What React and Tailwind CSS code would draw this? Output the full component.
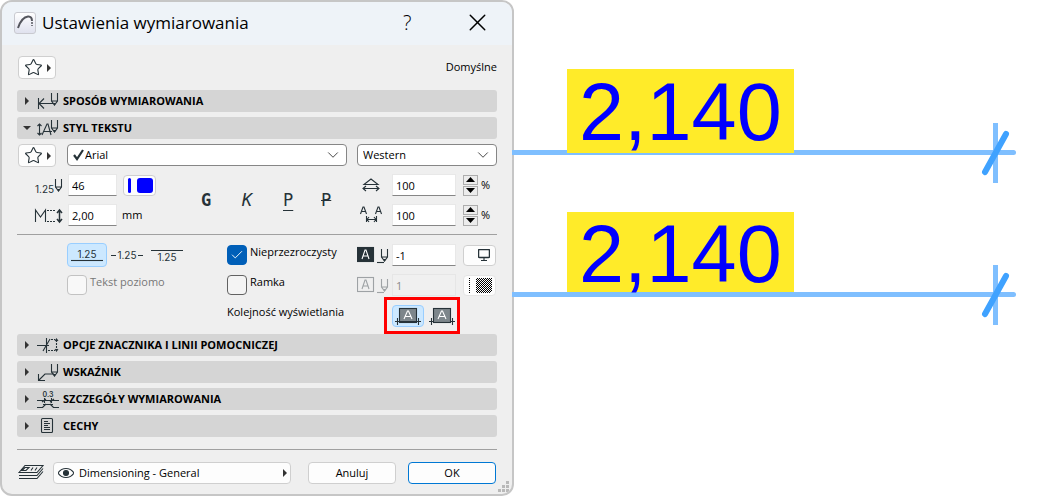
import { useState } from 'react';
import { Check, ChevronDown, Star, X } from 'lucide-react';

const ink = '#263238';

const Caret = ({ open = false }) => (
  <svg width="8" height="8" viewBox="0 0 8 8" className="shrink-0" fill="#333">
    {open ? <path d="M0 2h8L4 6z" /> : <path d="M2 0v8l4-4z" />}
  </svg>
);

// Pen nib reused by several of the icons
const Pen = ({ x = 0, y = 0 }) => (
  <g transform={`translate(${x} ${y})`}>
    <path d="M.5 0v8l3 4 3-4V0M.5 8h6" />
    <path d="M2 10h3l-1.500 2.500z" fill="currentColor" stroke="none" />
  </g>
);

const Icon = ({ width = 22, height = 18, className = '', children }) => (
  <svg
    width={width}
    height={height}
    viewBox={`0 0 ${width} ${height}`}
    fill="none"
    stroke="currentColor"
    strokeWidth="1.1"
    className={`shrink-0 text-[#263238] ${className}`}
  >
    {children}
  </svg>
);

const MethodIcon = () => (
  <Icon>
    <path d="M1.500 6v11M2 11.500h14M7 6.500l-5 5 5 5" />
    <Pen x={14} y={1} />
  </Icon>
);

const TextStyleIcon = () => (
  <Icon>
    <path d="M2.500 5v11M.5 7l2-2 2 2M.5 14l2 2 2-2M5 16l5-11h1l3 11M7 12.500h8" />
    <Pen x={14} y={1} />
  </Icon>
);

const MarkerIcon = () => (
  <Icon>
    <path d="M0 9.500h12M9.500 2v15M6 15l7-12" />
    <path d="M14 3.500h4M11 14.500h7M19.500 4v10" strokeDasharray="2 1" />
    <path d="M18 5l1.500-2 1.500 2M18 13l1.500 2 1.500-2" />
  </Icon>
);

const PointerIcon = () => (
  <Icon>
    <path d="M1.500 11v6.500H8M2 17l6-6h9" />
    <Pen x={14} y={1} />
  </Icon>
);

const DetailsIcon = () => (
  <Icon>
    <text x="11" y="7" textAnchor="middle" fontSize="7" stroke="none" fill="currentColor" className="font-[Inter,sans-serif] font-semibold">0.3</text>
    <path d="M0 10.500h22M0 17.500h6M16 17.500h6M6 14.500h10M7.500 8v5M14.500 8v5M5 18l4-4M13 14l4 4M5 12l4-3M13 12l4-3" />
  </Icon>
);

const PropertiesIcon = () => (
  <Icon>
    <rect x="4.500" y="1.500" width="11" height="14" rx="1" />
    <path d="M7 4.500h4M7 6.500h6M7 8.500h4M7 10.500h6M7 12.500h6" />
  </Icon>
);

const SectionBar = ({ icon, label, open = false }) => (
  <button
    type="button"
    aria-expanded={open}
    className="flex h-[22px] w-full items-center rounded-[3px] bg-[#d5d5d5] pl-1.5 text-left text-[11px] font-bold text-black"
  >
    <Caret open={open} />
    <span className="ml-1.5 mr-1 flex w-[22px]">{icon}</span>
    {label}
  </button>
);

const FavoriteButton = () => (
  <button
    type="button"
    aria-label="Ulubione"
    className="ml-px flex h-[23px] w-[38px] items-center justify-center gap-0.5 rounded border border-[#cfcfcf] bg-[#fdfdfd] pl-0.5"
  >
    <Star size={19} strokeWidth={1.4} color={ink} />
    <Caret />
  </button>
);

const SelectBox = ({ label, value, ticked = false, className = '' }) => (
  <div className={`flex h-[22px] items-center rounded-sm border border-[#868686] bg-white pl-[5px] pr-1 ${className}`}>
    {ticked && (
      <svg width="11" height="12" viewBox="0 0 11 12" fill="none" stroke={ink} strokeWidth="2.200" className="mr-px shrink-0">
        <path d="M1 6l3 4L10 1" />
      </svg>
    )}
    <select aria-label={label} defaultValue={value} className="min-w-0 flex-1 appearance-none bg-transparent text-[11px]">
      <option>{value}</option>
    </select>
    <ChevronDown size={18} strokeWidth={1.3} color="#444" className="pointer-events-none shrink-0" />
  </div>
);

const Field = ({ label, value, disabled = false, className = '' }) => (
  <input
    type="text"
    aria-label={label}
    defaultValue={value}
    disabled={disabled}
    className={`h-[22px] border px-[3px] text-[11px] ${
      disabled ? 'border-[#e6e6e6] bg-[#f0f0f0] text-[#8a8a8a]' : 'border-[#e8e8e8] border-b-[#868686] bg-white'
    } ${className}`}
  />
);

const Spinner = ({ label }) => (
  <div className="flex flex-col gap-px">
    <button type="button" aria-label={`${label} +`} className="flex h-[10px] w-[15px] items-center justify-center border border-[#adadad] bg-[#ececec]">
      <svg width="9" height="5" viewBox="0 0 9 5"><path d="M0 5h9L4.500 0z" /></svg>
    </button>
    <button type="button" aria-label={`${label} -`} className="flex h-[10px] w-[15px] items-center justify-center border border-[#adadad] bg-[#ececec]">
      <svg width="9" height="5" viewBox="0 0 9 5"><path d="M0 0h9L4.500 5z" /></svg>
    </button>
  </div>
);

const CheckBox = ({ label, initial = false, disabled = false }) => {
  const [checked, setChecked] = useState(initial);

  return (
    <label className={`flex gap-[3px] text-[11px] leading-[14px] ${disabled ? 'text-[#777]' : 'text-black'}`}>
      <span className="grid size-5 shrink-0">
        <input
          type="checkbox"
          checked={checked}
          disabled={disabled}
          onChange={() => setChecked(!checked)}
          className={`col-start-1 row-start-1 size-5 appearance-none rounded border checked:border-[#005fb8] checked:bg-[#005fb8] ${
            disabled ? 'border-[#c2c2c2] bg-[#f8f8f8]' : 'border-[#626262] bg-[#f4f4f4]'
          }`}
        />
        {checked && (
          <Check size={14} strokeWidth={1.6} color="white" className="pointer-events-none col-start-1 row-start-1 place-self-center" />
        )}
      </span>
      {label}
    </label>
  );
};

const PlacementIcon = ({ line }) => (
  <Icon width={32} height={20} className="font-[Inter,sans-serif]">
    {line === 'middle' ? (
      <>
        <path d="M0 10.500h5M27 10.500h5" />
        <text x="16" y="14" textAnchor="middle" fontSize="10" stroke="none" fill="currentColor">1.25</text>
      </>
    ) : (
      <>
        <path d={line === 'below' ? 'M0 15.500h32' : 'M0 5.500h32'} />
        <text x="16" y={line === 'below' ? 13 : 16} textAnchor="middle" fontSize="10" stroke="none" fill="currentColor">1.25</text>
      </>
    )}
  </Icon>
);

const BackgroundPenIcon = ({ filled = false }) => (
  <Icon width={32} height={18} className={filled ? '' : 'opacity-40'}>
    <rect x=".5" y="1.500" width="16" height="14" fill={filled ? ink : 'none'} />
    <path d="M5 13l3-9h1l3 9M6 10h5" stroke={filled ? 'white' : ink} />
    <path d="M20 16.500h7" />
    <Pen x={24} y={3} />
  </Icon>
);

const OrderIcon = ({ front = false }) => (
  <Icon width={26} height={20}>
    <rect x="4.500" y="2.500" width="17" height="14" fill="#7d868b" />
    <path d="M9 13l3.500-8h1L17 13M10 10.500h6" stroke="white" />
    <path d={front ? 'M0 15.500h4M22 15.500h4M2.500 12v7M23.500 12v7' : 'M0 15.500h26M2.500 12v7M23.500 12v7'} />
  </Icon>
);

const TextSettings = () => (
  <>
    <div className="flex h-[27px] items-start pt-[5px]">
      <FavoriteButton />
      <SelectBox label="Czcionka" value="Arial" ticked className="ml-[11px] min-w-0 flex-1" />
      <SelectBox label="Skrypt" value="Western" className="ml-2.5 w-[140px]" />
    </div>

    <div className="mt-2 flex">
      <div className="ml-[17px] flex flex-col gap-2">
        <div className="flex items-center">
          <Icon width={30} height={20}>
            <text x="1" y="18" fontSize="10" stroke="none" fill="currentColor" className="font-[Inter,sans-serif]">1.25</text>
            <Pen x={21} y={4} />
          </Icon>
          <Field label="Pióro tekstu" value="46" className="ml-1 w-[49px]" />
          <button type="button" aria-label="Kolor pióra" className="ml-1.5 flex h-[21px] w-[33px] items-center gap-1.5 rounded border border-[#cfcfcf] bg-[#fdfdfd] pl-1">
            <span className="h-[15px] w-[3px] rounded-sm bg-[#0000ff]" />
            <span className="h-[15px] w-4 rounded-[3px] bg-[#0000ff]" />
          </button>
        </div>
        <label className="flex items-center text-[11px]">
          <Icon width={30} height={20}>
            <path d="M1.500 17V5l5 7 5-7v12" />
            <path d="M13 5.500h9M13 16.500h9" strokeDasharray="2 1" />
            <path d="M25.500 5v12M23 8l2.500-3L28 8M23 14l2.500 3 2.500-3" strokeWidth="1.500" />
          </Icon>
          <Field label="Wysokość tekstu" value="2,00" className="ml-1 mr-[5px] w-[49px]" />
          mm
        </label>
      </div>

      <div className="flex min-w-0 flex-1 items-center pl-[45px] font-['DejaVu_Sans_Mono',monospace] text-[17px] leading-5 text-[#263238]">
        <button type="button" className="w-[41px] text-left font-bold">G</button>
        <button type="button" className="w-[41px] text-left italic">K</button>
        <button type="button" className="w-[38px] text-left underline underline-offset-4">P</button>
        <button type="button" className="text-left line-through">P</button>
      </div>

      <div className="flex w-[140px] flex-col gap-2 text-[11px]">
        <div className="flex items-center">
          <Icon width={28} height={20} className="ml-1">
            <path d="M3 9.500L10 4l7 5.500zM2 13.500h16M5 11l-3 2.500L5 16M15 11l3 2.500-3 2.500" />
          </Icon>
          <Field label="Szerokość" value="100" className="ml-[3px] w-16" />
          <span className="ml-[7px] flex items-center gap-[3px]"><Spinner label="Szerokość" />%</span>
        </div>
        <div className="flex items-center">
          <Icon width={28} height={20} className="ml-px mr-[3px]">
            <path d="M2.500 9L5 2h1l2.500 7M4 6.500h4M17.500 9L20 2h1l2.500 7M19 6.500h4M8.500 11v6M18.500 11v6M9 14.500h9M11 12l-2 2.500 2 2.500M16 12l2 2.500-2 2.500" />
          </Icon>
          <Field label="Odstępy" value="100" className="ml-[3px] w-16" />
          <span className="ml-[7px] flex items-center gap-[3px]"><Spinner label="Odstępy" />%</span>
        </div>
      </div>
    </div>

    <hr className="mt-2 border-[#a0a0a0]" />

    <div className="flex h-[99px] pt-2">
      <div className="flex-1 pl-[50px]">
        <div className="flex items-center gap-1">
          <button type="button" aria-label="Nad linią" className="flex h-6 w-10 items-center justify-center rounded-sm border border-[#99ceff] bg-[#cce8ff]">
            <PlacementIcon line="below" />
          </button>
          <button type="button" aria-label="W linii" className="pr-1"><PlacementIcon line="middle" /></button>
          <button type="button" aria-label="Pod linią"><PlacementIcon line="above" /></button>
        </div>
        <div className="mt-2">
          <CheckBox label="Tekst poziomo" disabled />
        </div>
      </div>

      <div className="flex w-[130px] flex-col gap-2.5 pt-0.5">
        <CheckBox label="Nieprzezroczysty" initial />
        <CheckBox label="Ramka" />
        <span className="whitespace-nowrap text-[11px] leading-[14px]">Kolejność wyświetlania</span>
      </div>

      <div className="flex w-[140px] flex-col pt-px">
        <div className="flex items-center">
          <BackgroundPenIcon filled />
          <Field label="Pióro tła" value="-1" className="ml-[3px] w-16" />
          <button type="button" aria-label="Tło okna" className="ml-[7px] flex h-[21px] w-[33px] items-center justify-end rounded border border-[#cfcfcf] bg-[#fdfdfd] pr-[5px]">
            <Icon width={12} height={12}>
              <rect x=".5" y=".5" width="11" height="8" rx="1" strokeWidth="1.500" />
              <path d="M6 8v3M3 11.500h6" />
            </Icon>
          </button>
        </div>
        <div className="mt-2 flex items-center">
          <BackgroundPenIcon />
          <Field label="Pióro ramki" value="1" disabled className="ml-[3px] w-16" />
          <button type="button" aria-label="Kolor ramki" disabled className="ml-[7px] flex h-[21px] w-[33px] items-center justify-center rounded border border-[#e4e4e4] bg-[#fdfdfd]">
            <svg width="26" height="15" viewBox="0 0 26 15" shapeRendering="crispEdges">
              <defs>
                <pattern id="dots" width="2" height="2" patternUnits="userSpaceOnUse">
                  <path d="M0 0h1v1H0zM1 1h1v1H1z" />
                </pattern>
              </defs>
              <path d="M2.500 0v15" stroke="#000" strokeDasharray="1 1" />
              <rect x="9" width="16" height="15" rx="2" fill="url(#dots)" />
            </svg>
          </button>
        </div>
        <div className="ml-[27px] mt-px flex h-[37px] w-[76px] shrink-0 items-center border-3 border-[#ff0000] pl-[5px]">
          <button type="button" aria-label="Tekst pod linią wymiarową" className="flex h-[22px] w-8 items-center justify-center rounded-sm border border-[#99ceff] bg-[#cce8ff]">
            <OrderIcon />
          </button>
          <button type="button" aria-label="Tekst nad linią wymiarową" className="ml-[5px]">
            <OrderIcon front />
          </button>
        </div>
      </div>
    </div>
  </>
);

const SettingsDialog = () => (
  <section className="overflow-hidden rounded-xl border-2 border-[#c6c6c6] bg-[#efefef]">
    <header className="flex h-[43px] items-center bg-[#eef3f8] pb-0.5 pl-3">
      <svg width="22" height="22" viewBox="0 0 22 22" fill="none">
        <defs>
          <linearGradient id="logo" x1="0" y1="0" x2="0" y2="1">
            <stop offset="0" stopColor="#ffffff" />
            <stop offset="1" stopColor="#dfe1ee" />
          </linearGradient>
        </defs>
        <rect x=".5" y=".5" width="21" height="21" rx="2.500" fill="url(#logo)" stroke="#c9cad0" />
        <path d="M4 16C6 10 9 5 14 4.500c3-.3 4 2 4 4.500" stroke="#55575e" strokeWidth="2" />
        <path d="M18 10v4" stroke="#55575e" strokeWidth="1.500" strokeDasharray="2 1" />
      </svg>
      <h1 className="ml-1.5 flex-1 text-[17px] leading-6">Ustawienia wymiarowania</h1>
      <button type="button" className="w-[60px] text-left text-[20px] font-light leading-6">?</button>
      <button type="button" aria-label="Zamknij" className="mr-5"><X size={29} strokeWidth={1.2} /></button>
    </header>

    <div className="px-[15px] pt-[11px]">
      <div className="mb-[11px] flex items-center justify-between text-[11px]">
        <FavoriteButton />
        Domyślne
      </div>

      <div className="flex flex-col gap-[5px]">
        <SectionBar icon={<MethodIcon />} label="SPOSÓB WYMIAROWANIA" />
        <SectionBar icon={<TextStyleIcon />} label="STYL TEKSTU" open />
      </div>

      <TextSettings />

      <div className="flex flex-col gap-[5px]">
        <SectionBar icon={<MarkerIcon />} label="OPCJE ZNACZNIKA I LINII POMOCNICZEJ" />
        <SectionBar icon={<PointerIcon />} label="WSKAŹNIK" />
        <SectionBar icon={<DetailsIcon />} label="SZCZEGÓŁY WYMIAROWANIA" />
        <SectionBar icon={<PropertiesIcon />} label="CECHY" />
      </div>

      <hr className="mt-3 border-[#a0a0a0]" />
    </div>

    <footer className="flex items-start pb-px pl-[15px] pt-3 text-[11px]">
      <Icon width={30} height={20}>
        <path d="M2 10.500L8 3.500h18l-6 7zM2 13.500h18l6-7M2 16.500h18l6-7M8 5.500l-3 3h4l3-3zM14 8.500l2-3M18 8.500l2-3" />
      </Icon>
      <button type="button" className="ml-1.5 flex h-[22px] min-w-0 flex-1 items-center rounded border border-[#cfcfcf] bg-[#fdfdfd] pl-1 pr-px">
        <Icon width={16} height={12}>
          <path d="M0 6c4-6 12-6 16 0-4 6-12 6-16 0z" />
          <circle cx="8" cy="6" r="2.500" fill="currentColor" />
        </Icon>
        <span className="ml-[5px] flex-1 text-left">Dimensioning - General</span>
        <Caret />
      </button>
      <button type="button" className="ml-[17px] h-[22px] w-[88px] rounded border border-[#cfcfcf] bg-[#fdfdfd]">Anuluj</button>
      <button type="button" className="ml-3 h-[22px] w-[88px] rounded border border-[#0078d4] bg-[#fdfdfd]">OK</button>
      <svg width="12" height="12" viewBox="0 0 12 12" fill="#b9b9b9" className="ml-0.5 mr-0.5 mt-[19px] shrink-0">
        <path d="M8 0h3v3H8zM4 4h3v3H4zM8 4h3v3H8zM0 8h3v3H0zM4 8h3v3H4zM8 8h3v3H8z" />
      </svg>
    </footer>
  </section>
);

// One dimension chain: the value on its opaque background, the line and the end marker
const Dimension = ({ value, behindLine = false }) => (
  <div className="relative">
    <div className={`relative ml-[53px] w-[227px] bg-[#ffeb29] pl-3 font-['Liberation_Sans',Arial,sans-serif] text-[81px] text-[#0000ff] ${
      behindLine ? 'h-20 leading-[84px]' : 'z-10 h-[84px] leading-[86px]'
    }`}>
      {value}
    </div>
    <div className={`-ml-0.5 mr-6 h-[5px] rounded-r-full bg-[#7fbfff] ${behindLine ? '' : '-mt-[3px]'}`} />
    <svg width="30" height="64" viewBox="0 0 30 64" className="absolute -bottom-[30px] right-[30px]" fill="none">
      <path d="M15.500 2v60" stroke="#7fbfff" strokeWidth="5" />
      <path d="M5 51L26 13" stroke="#3fa2ff" strokeWidth="6" strokeLinecap="round" />
    </svg>
  </div>
);

export default function App() {
  return (
    <main className="grid grid-cols-[514fr_526fr] bg-white font-['Open_Sans','Noto_Sans',sans-serif] text-black">
      <SettingsDialog />
      <div className="flex flex-col gap-[57px] pt-[69px]">
        <Dimension value="2,140" />
        <Dimension value="2,140" behindLine />
      </div>
    </main>
  );
}
